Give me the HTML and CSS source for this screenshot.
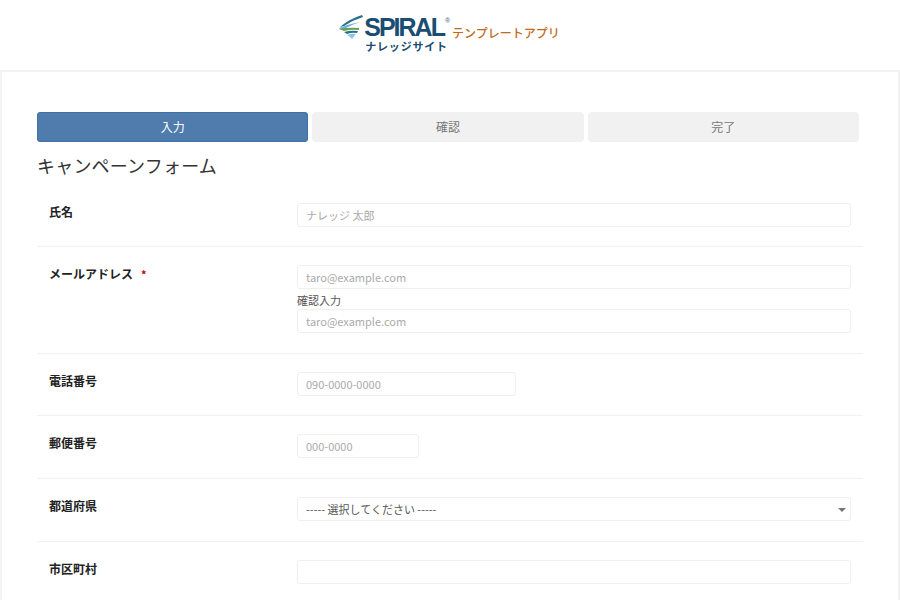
FILE: index.html
```html
<!DOCTYPE html>
<html lang="ja">
<head>
  <meta charset="UTF-8" />
  <title>キャンペーンフォーム</title>
  <link rel="stylesheet" href="styles.css">
</head>
<body>
  <header class="site-header">
    <div class="logo">
      <svg class="logo-mark" width="27" height="28" viewBox="0 0 27 28">
        <path d="M25 1 L26 3 Q16 6 7 12 L3 13 Q12 5 25 1 Z" fill="#2b7088"/>
        <path d="M2 14 Q12 10 23 8 Q14 11 7 15 L3 15 Z" fill="#6db0dc"/>
        <path d="M2 15 Q12 13 22 14 L22 16 Q14 15 7 17 Z" fill="#67a34e"/>
        <path d="M7 18 Q14 16 21 17 L20 19 Q15 18 10 20 Z" fill="#2b7088"/>
        <path d="M10 21 Q15 19 19 20 L15 25 L13 23 Z" fill="#8cc6ec"/>
      </svg>
      <div class="logo-words">
        <div class="logo-name">SPIRAL<sup>®</sup></div>
        <div class="logo-sub">ナレッジサイト</div>
      </div>
      <div class="logo-app">テンプレートアプリ</div>
    </div>
  </header>

  <main class="card">
    <div class="steps">
      <div class="step active">入力</div>
      <div class="step">確認</div>
      <div class="step">完了</div>
    </div>

    <h1 class="form-title">キャンペーンフォーム</h1>

    <div class="form-row">
      <label class="form-label">氏名</label>
      <div class="form-field">
        <input class="text-input" type="text" placeholder="ナレッジ 太郎">
      </div>
    </div>

    <div class="form-row">
      <label class="form-label">メールアドレス<span class="required">*</span></label>
      <div class="form-field">
        <input class="text-input" type="text" placeholder="taro@example.com">
        <div class="confirm-label">確認入力</div>
        <input class="text-input" type="text" placeholder="taro@example.com">
      </div>
    </div>

    <div class="form-row">
      <label class="form-label">電話番号</label>
      <div class="form-field">
        <input class="text-input tel" type="text" placeholder="090-0000-0000">
      </div>
    </div>

    <div class="form-row">
      <label class="form-label">郵便番号</label>
      <div class="form-field">
        <input class="text-input zip" type="text" placeholder="000-0000">
      </div>
    </div>

    <div class="form-row">
      <label class="form-label">都道府県</label>
      <div class="form-field">
        <div class="select-wrap">
          <select class="text-input select">
            <option>----- 選択してください -----</option>
          </select>
        </div>
      </div>
    </div>

    <div class="form-row">
      <label class="form-label">市区町村</label>
      <div class="form-field">
        <input class="text-input" type="text">
      </div>
    </div>
  </main>
</body>
</html>
```

FILE: styles.css
```css
html, body {
  height: 600px;
  overflow: hidden;
}

body {
  margin: 0;
  background: #fff;
  color: #333;
  font-family: "Noto Sans CJK JP", "Noto Sans", sans-serif;
  font-size: 12px;
}

.site-header {
  height: 70px;
  display: flex;
  justify-content: center;
}

.logo {
  display: flex;
  align-items: flex-start;
  padding-top: 14px;
  margin-right: 3px;
}

.logo-words {
  padding-top: 1px;
}

.logo-name {
  font-family: "Liberation Sans", sans-serif;
  font-weight: 700;
  font-size: 25px;
  line-height: 25px;
  letter-spacing: -2px;
  color: #1a4d72;
}

.logo-name sup {
  font-size: 7px;
  line-height: 0;
  letter-spacing: 0;
  margin-left: 1px;
  color: #6b8296;
  vertical-align: 13px;
}

.logo-sub {
  font-weight: 700;
  font-size: 11px;
  line-height: 13px;
  letter-spacing: 0.8px;
  color: #1a4d72;
  margin-left: 1px;
}

.logo-app {
  font-weight: 500;
  font-size: 12px;
  line-height: 18px;
  color: #bf6a1c;
  margin-left: 2px;
  margin-top: 10px;
}

.card {
  border: 2px solid #f3f3f3;
  border-bottom: none;
  padding: 40px 39px 0 35px;
}

.steps {
  display: grid;
  grid-template-columns: repeat(3, 1fr);
  gap: 4px;
}

.step {
  height: 30px;
  line-height: 30px;
  text-align: center;
  background: #f1f1f1;
  border-radius: 4px;
  color: #777;
  font-size: 12px;
}

.step.active {
  background: #4f7cac;
  box-shadow: inset 0 0 0 1px #3f72a8;
  color: #fff;
}

.form-title {
  margin: 10px 0 24.7px;
  font-size: 18px;
  line-height: 26px;
  font-weight: 400;
  letter-spacing: 0.2px;
  color: #333;
}

.form-row {
  display: flex;
  padding: 0 12px 19.5px 12px;
  margin-bottom: 18.1px;
  margin-right: -4px;
  border-bottom: 1px solid #f1f1f1;
}

.form-label {
  width: 248px;
  flex: none;
  font-weight: 700;
  font-size: 12px;
  line-height: 18px;
  color: #222;
}

.required {
  color: #c00;
  margin-left: 8px;
  font-weight: 700;
  font-size: 11px;
}

.form-field {
  flex: 1;
}

.text-input {
  display: block;
  box-sizing: border-box;
  width: 100%;
  height: 24px;
  padding: 0 8px;
  border: 1px solid #efefef;
  border-radius: 3px;
  background: #fff;
  font-family: "Noto Sans CJK JP", "Noto Sans", sans-serif;
  font-size: 11px;
  color: #555;
  outline: none;
}

.text-input::placeholder {
  color: #aaa;
  opacity: 1;
}

.tel {
  width: 219px;
}

.zip {
  width: 122px;
}

.confirm-label {
  font-size: 11px;
  line-height: 16px;
  margin: 3px 0 1px;
  color: #555;
}

.select-wrap {
  position: relative;
}

.select {
  appearance: none;
}

.select-wrap::after {
  content: "";
  position: absolute;
  right: 5px;
  top: 11px;
  border-left: 4px solid transparent;
  border-right: 4px solid transparent;
  border-top: 4px solid #777;
}
```
